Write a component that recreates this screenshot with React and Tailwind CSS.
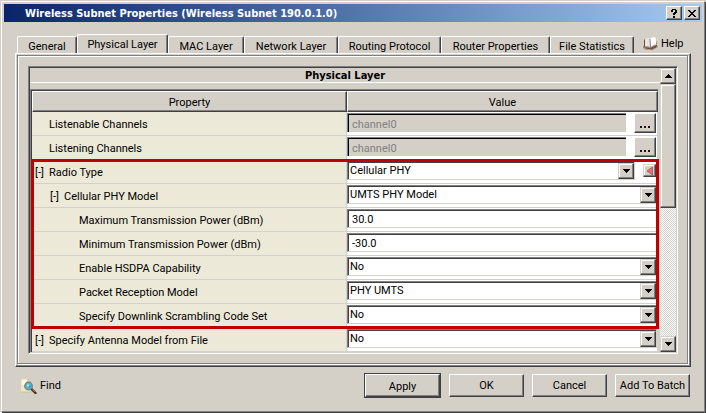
import React from "react";

const sunken =
  "border border-t-[#808080] border-l-[#808080] border-b-[#d4d0c8] border-r-[#d4d0c8] shadow-[inset_1px_1px_#404040]";
const raised =
  "border border-t-white border-l-white border-b-[#404040] border-r-[#404040] shadow-[inset_-1px_-1px_#808080]";
const raisedSoft =
  "border border-t-[#d4d0c8] border-l-[#d4d0c8] border-b-[#404040] border-r-[#404040] shadow-[inset_-1px_-1px_#808080,inset_1px_1px_#ffffff]";

const tabs = [
  { name: "General", width: "w-[60px]" },
  { name: "Physical Layer", width: "w-[91px]", selected: true },
  { name: "MAC Layer", width: "w-[76px]" },
  { name: "Network Layer", width: "w-[94px]" },
  { name: "Routing Protocol", width: "w-[103px]" },
  { name: "Router Properties", width: "w-[109px]" },
  { name: "File Statistics", width: "w-[84px]" },
];

const rows = [
  { label: "Listenable Channels", indent: "pl-[17px]", kind: "channel", value: "channel0" },
  { label: "Listening Channels", indent: "pl-[17px]", kind: "channel", value: "channel0" },
  { label: "Radio Type", indent: "pl-[3px]", tree: true, kind: "select", value: "Cellular PHY", reset: true },
  { label: "Cellular PHY Model", indent: "pl-[18px]", tree: true, kind: "select", value: "UMTS PHY Model" },
  { label: "Maximum Transmission Power (dBm)", indent: "pl-[47px]", kind: "text", value: "30.0" },
  { label: "Minimum Transmission Power (dBm)", indent: "pl-[47px]", kind: "text", value: "-30.0" },
  { label: "Enable HSDPA Capability", indent: "pl-[47px]", kind: "select", value: "No" },
  { label: "Packet Reception Model", indent: "pl-[47px]", kind: "select", value: "PHY UMTS" },
  { label: "Specify Downlink Scrambling Code Set", indent: "pl-[47px]", kind: "select", value: "No" },
  { label: "Specify Antenna Model from File", indent: "pl-[3px]", tree: true, kind: "select", value: "No" },
];

function Arrow({ up }) {
  return (
    <svg width="7" height="4" viewBox="0 0 7 4" shapeRendering="crispEdges" aria-hidden="true">
      <path d={up ? "M3 0h1v1h1v1h1v1h1v1H0V3h1V2h1V1h1z" : "M0 0h7v1H6v1H5v1H4v1H3V3H2V2H1V1H0z"} fill="#000" />
    </svg>
  );
}

function BookIcon() {
  return (
    <svg width="15" height="14" viewBox="0 0 15 14" aria-hidden="true">
      <path d="M0 9l2-1 11-1 2 3-6 3.500-2-1-4 .5-3-2z" fill="#a2968e" />
      <path d="M1 3l1-1v8l5 1 5-2 2-5v5l-1 1.500-5 2-5-1-2-1.500z" fill="#7a4a35" />
      <path d="M2.500 2c2-1.500 3.500-1.500 4.500 0l.5 9C6 9.500 4 9.500 2 10z" fill="#e9e6e2" />
      <path d="M7 2c1-2 4-2 5.500-1.500l1 7.500c-2-.3-4 .7-6 3z" fill="#fff" />
      <path d="M7 2l.5 9" stroke="#6d625c" strokeWidth=".8" />
      <path d="M2 10c2-.5 4-.5 5.500 1 2-2.300 4-3 6-3" fill="none" stroke="#8d827b" strokeWidth=".8" />
    </svg>
  );
}

function FindIcon() {
  return (
    <svg width="16" height="16" viewBox="0 0 16 16" aria-hidden="true">
      <path d="M0 1h7l3 3v10H0z" fill="#f5e7bd" />
      <path d="M0 14h10V4L7 1v3h3" fill="none" stroke="#cdb98a" strokeWidth=".8" />
      <path d="M1 2h5v5H1z" fill="#fff8e4" />
      <path d="M10.500 11l4 4" stroke="#4d2b1c" strokeWidth="2.400" strokeLinecap="round" />
      <path d="M11.500 11.500l2.500 2.500" stroke="#c46b32" strokeWidth="1" />
      <circle cx="7.500" cy="8" r="3.800" fill="#58b5cf" stroke="#6c7f86" strokeWidth="1.200" />
      <path d="M6 6.500h2v2H6z" fill="#b9e8f2" />
      <path d="M8 9.500l2-2" stroke="#237a99" />
    </svg>
  );
}

function Control({ row, id }) {
  if (row.kind === "channel") {
    return (
      <div className="flex items-start justify-between pr-px">
        <input
          id={id}
          disabled
          defaultValue={row.value}
          className="h-[19px] min-w-0 flex-1 border-t border-l border-[#808080] bg-[#d4d0c8] pt-0.5 pl-1 text-[#808080] shadow-[inset_1px_1px_#000000]"
        />
        <button
          aria-label={`Edit ${row.label}`}
          className={`ml-2 flex h-5 w-[22px] items-center justify-center bg-[#d4d0c8] pt-2 ${raised}`}
        >
          <svg width="10" height="2" viewBox="0 0 10 2" shapeRendering="crispEdges" aria-hidden="true">
            <path d="M0 0h2v2H0zM4 0h2v2H4zM8 0h2v2H8z" fill="#1c1030" />
          </svg>
        </button>
      </div>
    );
  }
  if (row.kind === "text") {
    return (
      <div className="flex">
        <input id={id} defaultValue={row.value} className={`h-[19px] min-w-0 flex-1 bg-white pt-0.5 pl-1 ${sunken}`} />
      </div>
    );
  }
  return (
    <div className="flex items-center">
      <div className={`flex h-[19px] flex-1 items-center bg-white pl-0.5 ${sunken}`}>
        <select id={id} defaultValue={row.value} className="h-[17px] min-w-0 flex-1 appearance-none pt-px leading-4 outline-none">
          <option>{row.value}</option>
        </select>
        <span className={`pointer-events-none flex h-4 w-4 items-center justify-center bg-[#d4d0c8] ${raisedSoft}`}>
          <Arrow />
        </span>
      </div>
      {row.reset && (
        <button
          aria-label="Reset to default"
          className={`mr-px ml-2 flex h-[13px] w-[13px] items-center justify-center bg-[#d4d0c8] ${raisedSoft}`}
        >
          <svg width="8" height="10" viewBox="0 0 8 10" aria-hidden="true">
            <path d="M6.500 1v8L1 5z" fill="#f06a72" stroke="#8b5c5c" strokeWidth=".8" />
          </svg>
        </button>
      )}
    </div>
  );
}

export default function App() {
  return (
    <div className="border-t border-l border-[#d4d0c8] bg-[#d4d0c8] font-[Roboto,sans-serif] text-[11px] leading-4 text-black">
      <div className="mr-px mb-px border border-t-white border-r-[#808080] border-b-[#808080] border-l-white shadow-[1px_1px_#404040]">
        <header className="mx-0.5 mt-0.5 flex h-[18px] items-center bg-linear-to-r from-[#0a246a] to-[#a6caf0] pr-0.5 pl-[21px]">
          <h1 className="flex-1 pt-px font-['DejaVu_Sans_Condensed','DejaVu_Sans',sans-serif] text-[11px] font-bold whitespace-nowrap text-white">
            Wireless Subnet Properties (Wireless Subnet 190.0.1.0)
          </h1>
          <button aria-label="Help" className={`flex h-3.5 w-4 items-center justify-center bg-[#d4d0c8] ${raised}`}>
            <svg width="6" height="9" viewBox="0 0 6 9" shapeRendering="crispEdges" aria-hidden="true">
              <path d="M1 0h4v1h1v3H5v1H4v1H2V4h1V3h1V1H2v2H0V1h1zM2 7h2v2H2z" />
            </svg>
          </button>
          <button aria-label="Close" className={`ml-0.5 flex h-3.5 w-4 items-center justify-center bg-[#d4d0c8] ${raised}`}>
            <svg width="8" height="7" viewBox="0 0 8 7" shapeRendering="crispEdges" aria-hidden="true">
              <path d="M0 0h2v1h1v1h2V1h1V0h2v1H7v1H6v1H5v1h1v1h1v1h1v1H6V6H5V5H3v1H2v1H0V6h1V5h1V4h1V3H2V2H1V1H0z" />
            </svg>
          </button>
        </header>

        <main className="mx-[13px] mt-3">
          <div className="flex items-end pl-0.5">
            <div role="tablist" className="flex items-end">
              {tabs.map((t) => (
                <button
                  key={t.name}
                  role="tab"
                  aria-selected={!!t.selected}
                  className={`rounded-t-[2px] border-t border-r border-l border-t-white border-r-[#404040] border-l-white text-center whitespace-nowrap shadow-[inset_-1px_0_#808080] ${t.width} ${
                    t.selected ? "h-[19px] pt-0.5" : "h-[17px] pt-0.5"
                  }`}
                >
                  {t.name}
                </button>
              ))}
            </div>
            <button className="ml-[9px] flex h-[19px] items-center gap-[3px] pt-px">
              <BookIcon />
              Help
            </button>
          </div>

          <section className="border border-t-white border-r-[#404040] border-b-[#404040] border-l-white pt-px pr-0.5 pb-0.5 pl-px shadow-[inset_-1px_-1px_#808080]">
            <div className="border border-[#808080] pt-[10px] pr-[9px] pb-[9px] pl-[10px] shadow-[inset_1px_1px_#ffffff,1px_1px_#ffffff]">
              <div className="flex border border-t-[#808080] border-r-white border-b-white border-l-[#808080] p-px shadow-[inset_1px_1px_#404040,inset_-1px_-1px_#d4d0c8]">
                <div className="relative min-w-0 flex-1">
                  <h2 className="h-[15px] border-b border-white text-center font-['DejaVu_Sans_Condensed','DejaVu_Sans',sans-serif] text-[11px] leading-4 font-bold">
                    Physical Layer
                  </h2>
                  <div className="mt-1.5 mr-0.5 border-t border-l border-[#808080]">
                    <table className="w-full table-fixed border-separate border-spacing-0 border-t border-l border-[#404040]">
                      <thead>
                        <tr className="h-[21px]">
                          <th className={`w-[315px] p-0 pt-0.5 font-normal ${raised}`}>Property</th>
                          <th className={`p-0 pt-0.5 font-normal ${raised}`}>Value</th>
                        </tr>
                      </thead>
                      <tbody>
                        {rows.map((row, i) => (
                          <tr key={row.label} className="h-6">
                            <td className={`border-r border-b border-[#d4d0d0] bg-[#ece9d8] p-0 pt-0.5 align-middle whitespace-nowrap ${row.indent}`}>
                              <div className="flex gap-[3px]">
                                {row.tree && <span className="w-[11px]">[-]</span>}
                                <label htmlFor={`field-${i}`}>{row.label}</label>
                              </div>
                            </td>
                            <td className="border-r border-b border-[#d4d0d0] bg-white p-0 pt-px align-top">
                              <Control row={row} id={`field-${i}`} />
                            </td>
                          </tr>
                        ))}
                      </tbody>
                    </table>
                  </div>
                  <div className="pointer-events-none absolute right-px bottom-[23px] left-px h-[170px] border-3 border-[#c00000]" />
                </div>
                <div className="flex w-4 flex-col bg-[conic-gradient(#ffffff_25%,#d4d0c8_0_50%,#ffffff_0_75%,#d4d0c8_0)] bg-[length:2px_2px]">
                  <button aria-label="Scroll up" className={`flex h-4 items-center justify-center bg-[#d4d0c8] ${raisedSoft}`}>
                    <Arrow up />
                  </button>
                  <div className={`h-[124px] bg-[#d4d0c8] ${raisedSoft}`} />
                  <div className="flex-1" />
                  <button aria-label="Scroll down" className={`flex h-4 items-center justify-center bg-[#d4d0c8] ${raisedSoft}`}>
                    <Arrow />
                  </button>
                </div>
              </div>
            </div>
          </section>
        </main>

        <footer className="mx-[13px] mt-1.5 mb-[13px] flex items-center">
          <button className="ml-[6px] flex items-center gap-[3px]">
            <FindIcon />
            Find
          </button>
          <div className="ml-auto flex items-center gap-2 pr-px">
            <button className="border border-[#404040]">
              <span className={`block h-[23px] w-[75px] pt-px leading-[21px] ${raised}`}>Apply</span>
            </button>
            <button className={`h-[23px] w-[75px] pt-px ${raised}`}>OK</button>
            <button className={`h-[23px] w-[75px] pt-px ${raised}`}>Cancel</button>
            <button className={`h-[23px] w-[75px] pt-px whitespace-nowrap ${raised}`}>Add To Batch</button>
          </div>
        </footer>
      </div>
    </div>
  );
}
